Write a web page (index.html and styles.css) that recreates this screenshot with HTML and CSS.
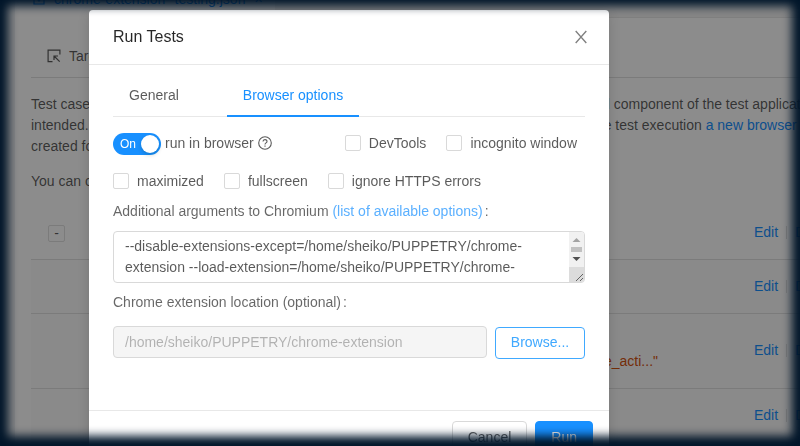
FILE: index.html
```html
<!DOCTYPE html>
<html lang="en">
<head>
<meta charset="utf-8">
<title>Run Tests</title>
<link rel="stylesheet" href="styles.css">
</head>
<body>
<div class="page">
  <div class="tabbar">
    <div class="file-tab">
      <svg width="12" height="12" viewBox="0 0 12 12" fill="none" stroke="currentColor" stroke-width="1.2"><path d="M1 1h10v10H1zM3 5l3 3 4-5"/></svg>
      <span>chrome-extension--testing.json</span><span>×</span>
    </div>
  </div>
  <main class="panel">
    <div class="section-tabs">
      <svg width="14" height="14" viewBox="0 0 14 14" fill="none" stroke="currentColor" stroke-width="1.2"><path d="M5.500 12.700H1.100V1.100h11.800v4.400M12.700 12.700L7.500 7.500M7 11V7h4"/></svg>
      <span>Targets</span>
    </div>
    <div class="intro">
      <div class="line"><span>Test case</span><span class="first">al component of the test applicat</span></div>
      <div class="line"><span>intended.</span><span>the test execution <a>a new browser</a></span></div>
      <div class="line"><span>created for</span></div>
      <div class="line last"><span>You can c</span></div>
    </div>
    <div class="rows">
      <div class="row head"><span class="collapse">-</span><div class="actions"><a>Edit</a><i></i><a>D</a></div></div>
      <div class="row"><div class="actions"><a>Edit</a><i></i><a>D</a></div></div>
      <div class="row tall"><span class="value">e_acti..."</span><div class="actions"><a>Edit</a><i></i><a>D</a></div></div>
      <div class="row"><div class="actions"><a>Edit</a><i></i><a>D</a></div></div>
    </div>
  </main>
</div>
<div class="mask"></div>
<section class="modal">
  <header class="modal-head">
    <h1>Run Tests</h1>
    <svg width="12" height="14" viewBox="0 0 12 14" fill="none" stroke="currentColor" stroke-width="1.4"><path d="M.7 1l10.600 12M11.300 1L.7 13"/></svg>
  </header>
  <div class="modal-body">
    <nav class="tabs"><span class="tab">General</span><span class="tab active">Browser options</span></nav>
    <div class="options top">
      <span class="switch"><span>On</span><b></b></span>
      <span class="run-label">run in browser</span>
      <svg class="help" width="14" height="14" viewBox="0 0 14 14" fill="none" stroke="currentColor" stroke-width="1.1"><circle cx="7" cy="7" r="6.300"/><path d="M5 5.500C5 3 9 3 9 5.400 9 7 7 6.800 7 8.600M7 9.600v1.200"/></svg>
      <label class="check devtools"><i></i>DevTools</label>
      <label class="check"><i></i>incognito window</label>
    </div>
    <div class="options second">
      <label class="check"><i></i>maximized</label>
      <label class="check"><i></i>fullscreen</label>
      <label class="check"><i></i>ignore HTTPS errors</label>
    </div>
    <div class="label">Additional arguments to Chromium <a>(list of available options)</a><span class="colon">:</span></div>
    <div class="textarea">
      <div class="args">--disable-extensions-except=/home/sheiko/PUPPETRY/chrome-<br>extension --load-extension=/home/sheiko/PUPPETRY/chrome-</div>
      <svg class="scroll" width="15" height="50" viewBox="0 0 15 50"><path fill="#f1f1f1" d="M0 0h15v35H0z"/><path fill="#dcdcdc" d="M0 35h15v15H0z"/><path fill="#a3a3a3" d="M3.500 10h8l-4-4z"/><path fill="#c1c1c1" d="M2 15h11v5H2z"/><path fill="#505050" d="M3.500 25h8l-4 4z"/><path d="M7 49l7-7M11 49l3-3" stroke="#555" stroke-width=".9"/></svg>
    </div>
    <div class="label location">Chrome extension location (optional)<span class="colon">:</span></div>
    <div class="browse-row"><div class="path">/home/sheiko/PUPPETRY/chrome-extension</div><button class="browse">Browse...</button></div>
  </div>
  <footer class="modal-foot"><button class="cancel">Cancel</button><button class="run">Run</button></footer>
</section>
<div class="frame"></div>
</body>
</html>
```
FILE: styles.css
```css
* { box-sizing: border-box; }
html, body { margin: 0; height: 446px; overflow: hidden; }
body { font: 14px/21px "Liberation Sans", Arial, sans-serif; color: rgba(0,0,0,.65); background: #f0f2f5; }
a { color: #1890ff; }
i { font-style: normal; }
svg { display: block; flex: none; }
button { font: inherit; }
.page { height: 446px; overflow: hidden; padding-left: 15px; }
.tabbar { height: 18px; border-bottom: 1px solid #e8e8e8; background: #f5f5f5; }
.file-tab { display: flex; align-items: center; gap: 9px; width: 260px; height: 17px; padding: 0 18px 19px; background: #fff; color: #1890ff; white-space: nowrap; }
.file-tab span, .file-tab svg { position: relative; top: -1px; }
.panel { height: 428px; padding-left: 16px; background: #fff; }
.section-tabs { display: flex; align-items: center; gap: 8px; height: 60px; padding: 17px 0 0 16px; border-bottom: 1px solid #e0e0e0; }
.intro { padding-top: 16px; height: 128px; white-space: nowrap; }
.line { display: grid; grid-template-columns: 561px 1fr; height: 21px; }
.line .first { padding-left: 7px; }
.line.last { margin-top: 14px; }
.row { display: flex; align-items: center; height: 54px; border-bottom: 1px solid #e0e0e0; background: #fcfcfc; }
.row.head { background: #fff; }
.row.tall { height: 75px; }
.collapse { width: 17px; height: 17px; margin: 2px 0 0 17px; border: 1px solid #e0e0e0; border-radius: 2px; line-height: 14px; text-align: center; }
.value { width: 627px; padding-top: 20px; text-align: right; color: #d4520f; }
.actions { display: flex; align-items: center; width: 46px; margin-left: auto; gap: 8px; flex: none; }
.actions i { width: 1px; height: 13px; background: #e0e0e0; flex: none; }
.row.tall .actions { margin-top: -1px; }
.mask { position: fixed; inset: 0; background: rgba(0,0,0,.45); }
.modal { position: absolute; left: 89px; top: 10px; width: 520px; height: 455px; background: #fff; border-radius: 4px; box-shadow: 0 4px 12px rgba(0,0,0,.15); }
.modal-head { display: flex; justify-content: space-between; align-items: center; height: 55px; padding: 0 22px 0 24px; border-bottom: 1px solid #e8e8e8; color: rgba(0,0,0,.5); }
h1 { margin: 0; font-size: 16px; line-height: 22px; font-weight: 400; color: rgba(0,0,0,.85); padding-bottom: 1px; }
.modal-body { height: 345px; padding: 8px 24px 0; }
.tabs { display: flex; gap: 32px; height: 44px; border-bottom: 1px solid #e8e8e8; }
.tab { height: 44px; padding: 12px 16px 0; }
.tab.active { color: #1890ff; border-bottom: 2px solid #1890ff; }
.options { display: flex; align-items: center; }
.options.top { height: 22px; margin-top: 16px; }
.options.second { height: 22px; margin-top: 15px; gap: 20px; }
.switch { display: flex; align-items: center; justify-content: space-between; width: 48px; height: 22px; padding: 0 2px 0 7px; border-radius: 11px; background: #1890ff; color: #fff; font-size: 12px; }
.switch b { width: 18px; height: 18px; border-radius: 50%; background: #fff; box-shadow: 0 2px 4px rgba(0,35,11,.2); }
.run-label { margin: -2px 4px 0; }
.help { margin-top: -2px; }
.check { display: flex; align-items: center; gap: 8px; margin-top: -2px; white-space: nowrap; }
.second .check { margin-top: 0; }
.check i { width: 16px; height: 16px; border: 1px solid #d9d9d9; border-radius: 2px; }
.devtools { margin-left: auto; margin-right: 20px; }
.top .check:last-child { margin-right: 8px; }
.label { height: 21px; margin-top: 9px; color: rgba(0,0,0,.6); }
.label a { color: #5bb0ff; }
.colon { margin-left: 2px; }
.textarea { display: flex; justify-content: space-between; height: 52px; margin-top: 9px; border: 1px solid #d9d9d9; border-radius: 4px; overflow: hidden; }
.args { padding: 4px 0 0 11px; white-space: nowrap; }
.label.location { margin-top: 9px; }
.browse-row { display: flex; gap: 8px; margin-top: 13px; }
.path { width: 374px; height: 32px; padding: 5px 11px; border: 1px solid #d9d9d9; border-radius: 4px; background: #f5f5f5; color: rgba(0,0,0,.28); }
.browse { width: 90px; height: 32px; margin-top: 1px; padding: 0 0 2px; border: 1px solid #40a9ff; border-radius: 4px; background: #fff; color: #40a9ff; }
.modal-foot { display: flex; justify-content: flex-end; gap: 8px; height: 55px; padding: 10px 16px; border-top: 1px solid #e8e8e8; }
.modal-foot button { height: 32px; padding: 0 15px; border: 1px solid #d9d9d9; border-radius: 4px; background: #fff; color: rgba(0,0,0,.65); }
.modal-foot .run { background: #1890ff; border-color: #1890ff; color: #fff; }
.frame { position: fixed; inset: 0; box-shadow: inset 0 -2px 10px 8px #001529; pointer-events: none; }
```
